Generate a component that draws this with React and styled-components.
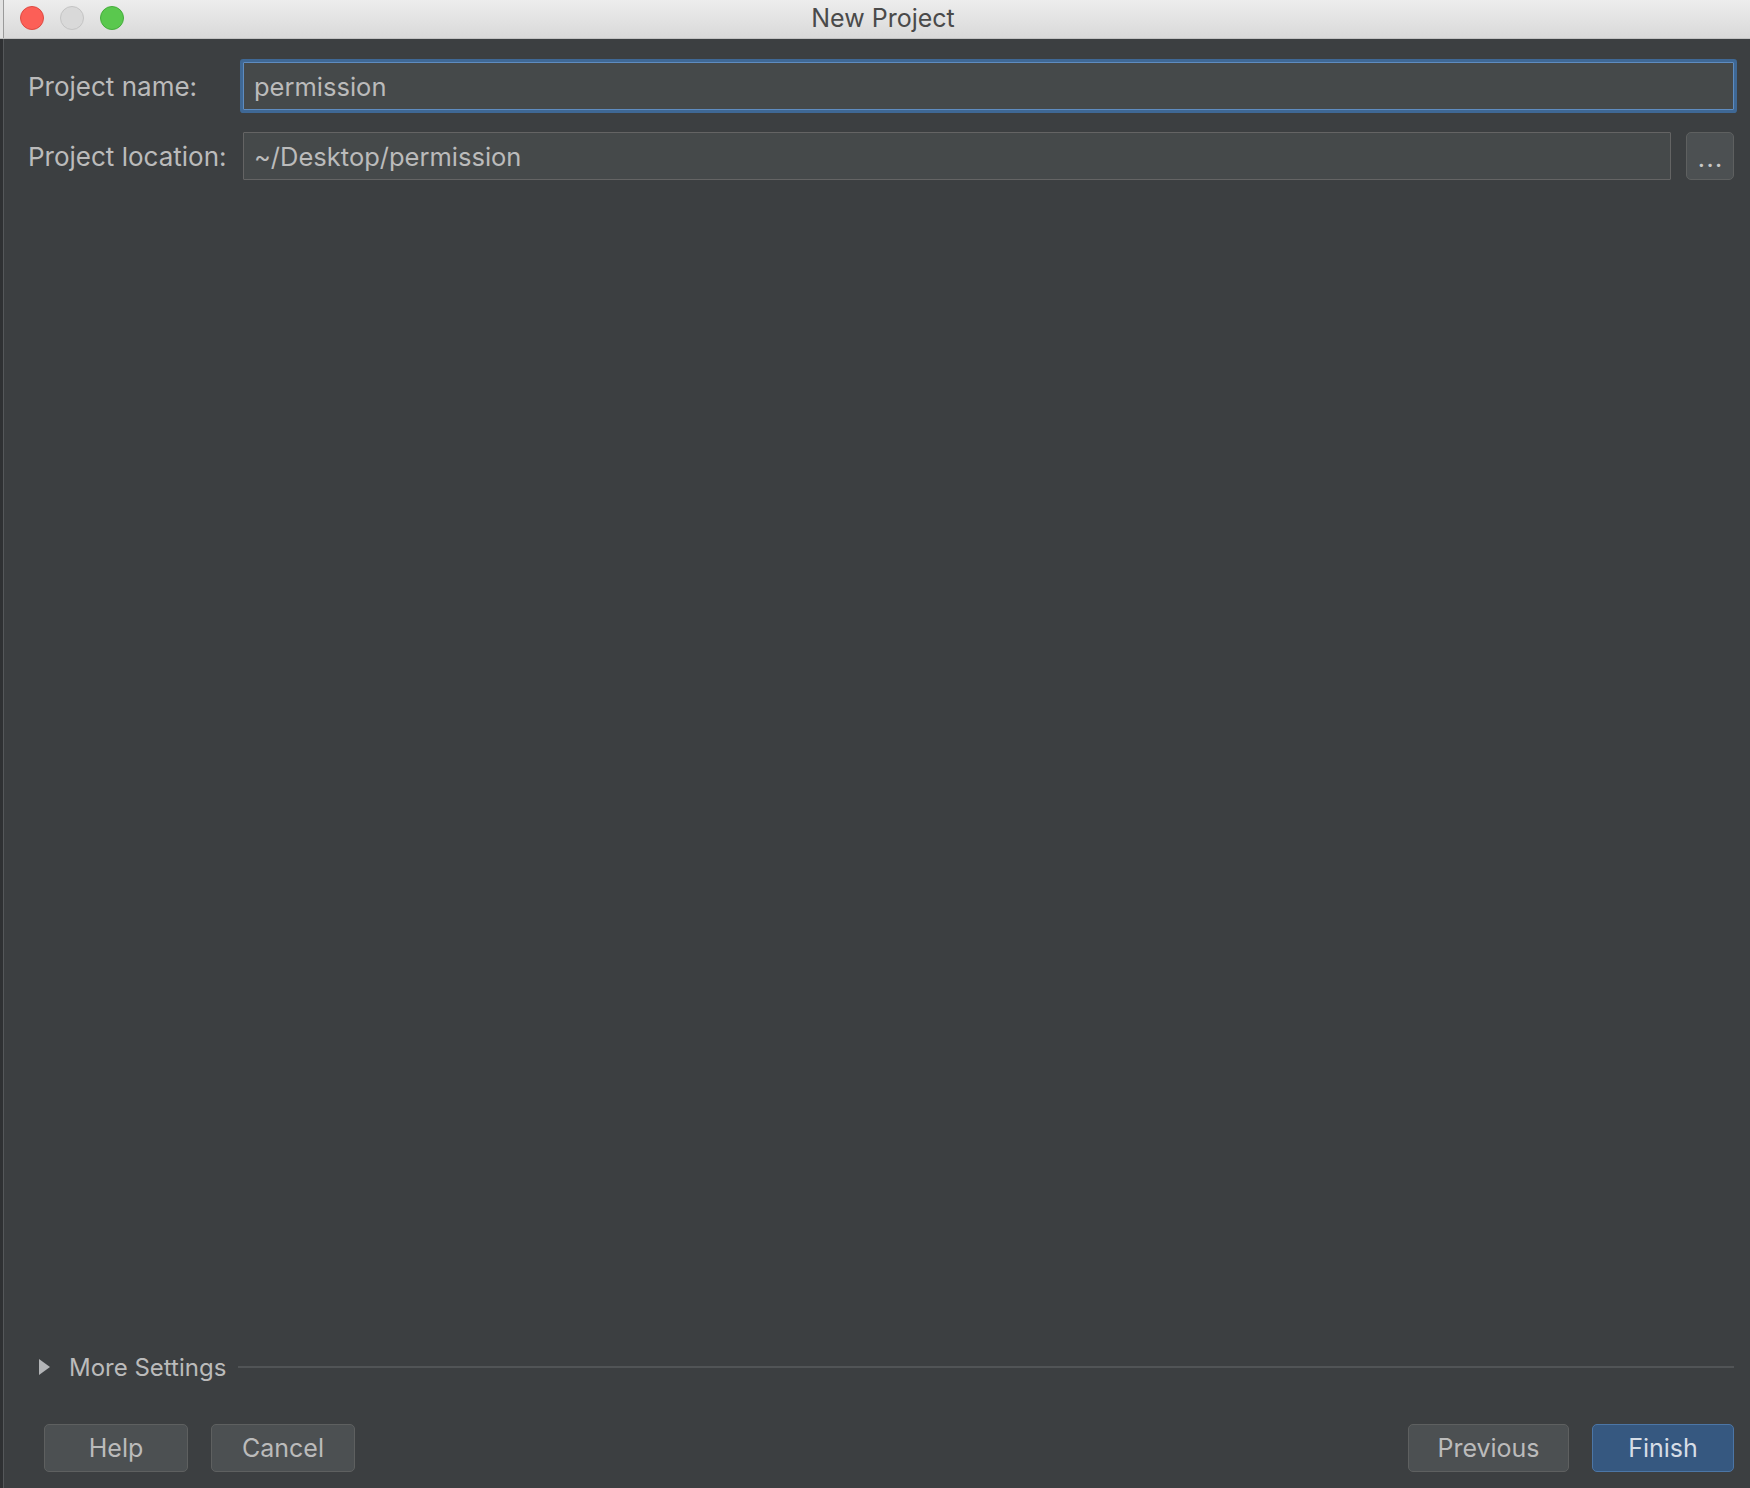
import styled, { createGlobalStyle } from 'styled-components'

const GlobalStyle = createGlobalStyle`
    html, body {
        margin: 0;
        padding: 0;
        height: 100%;
        background: #3c3f41;
    }
    #root {
        height: 100%;
    }
    * {
        box-sizing: border-box;
    }
`

export default function App() {
    return (
        <Window>
            <GlobalStyle />
            <TitleBar>
                <Lights>
                    <Light color="#fc5f57" edge="#de4a42" />
                    <Light color="#d9d9d9" edge="#c4c4c4" />
                    <Light color="#5ac84e" edge="#45ad3c" />
                </Lights>
                <Title>New Project</Title>
                <span />
            </TitleBar>
            <Body>
                <Form>
                    <Label>Project name:</Label>
                    <Input focused wide defaultValue="permission" />
                    <Label>Project location:</Label>
                    <Input defaultValue="~/Desktop/permission" />
                    <BrowseButton>...</BrowseButton>
                </Form>
                <Spacer />
                <MoreSettings>
                    <Arrow />
                    <MoreText>More Settings</MoreText>
                    <Rule />
                </MoreSettings>
                <Footer>
                    <Group>
                        <Button>Help</Button>
                        <Button>Cancel</Button>
                    </Group>
                    <Group>
                        <Button width="161px">Previous</Button>
                        <Button primary width="142px">Finish</Button>
                    </Group>
                </Footer>
            </Body>
        </Window>
    )
}

const Window = styled.div`
    height: 100%;
    display: flex;
    flex-direction: column;
    font-family: 'Inter', 'Liberation Sans', sans-serif;
`
const TitleBar = styled.div`
    height: 39px;
    flex-shrink: 0;
    display: grid;
    grid-template-columns: 1fr auto 1fr;
    align-items: center;
    background: linear-gradient(#ededed, #d9d9d9);
    border-bottom: 1px solid #c2c2c2;
    box-shadow: inset 3px 0 0 #e2e2e2, inset 4px 0 0 #9a9a9a;
`
const Lights = styled.div`
    display: flex;
    gap: 16px;
    padding-left: 20px;
    margin-top: -3px;
`
const Light = styled.span`
    width: 24px;
    height: 24px;
    border-radius: 50%;
    background: ${(p) => p.color};
    border: 1px solid ${(p) => p.edge};
`
const Title = styled.div`
    font-size: 25px;
    color: #4a4a4a;
    margin-left: 16px;
    margin-top: -2px;
`
const Body = styled.div`
    flex: 1;
    display: flex;
    flex-direction: column;
    padding: 23px 16px 16px 28px;
    background: #3c3f41;
    box-shadow: inset 3px 0 0 #2f3133, inset 4px 0 0 #55585a;
`
const Form = styled.div`
    display: grid;
    grid-template-columns: 200px 1fr 48px;
    column-gap: 15px;
    row-gap: 22px;
    align-items: center;
`
const Label = styled.label`
    font-size: 26px;
    color: #bbbbbb;
    white-space: nowrap;
`
const Input = styled.input`
    grid-column: ${(p) => (p.wide ? '2 / 4' : 'auto')};
    height: 48px;
    padding: 0 10px;
    font-family: inherit;
    font-size: 25.5px;
    color: #bbbbbb;
    background: #45494a;
    border: 1px solid ${(p) => (p.focused ? '#5e8cc0' : '#646464')};
    box-shadow: ${(p) => (p.focused ? '0 0 0 3px #3f6895' : 'none')};
    border-radius: 1px;
    outline: none;
`
const BrowseButton = styled.button`
    height: 48px;
    width: 48px;
    padding: 8px 0 0;
    font-family: inherit;
    font-size: 20px;
    font-weight: 700;
    color: #c8c8c8;
    background: #4c5052;
    border: 1px solid #5e6060;
    border-radius: 5px;
    letter-spacing: 2px;
    text-indent: 2px;
`
const Spacer = styled.div`
    flex: 1;
`
const MoreSettings = styled.div`
    display: flex;
    align-items: center;
    height: 30px;
    padding-left: 11px;
`
const Arrow = styled.span`
    width: 0;
    height: 0;
    border-top: 8px solid transparent;
    border-bottom: 8px solid transparent;
    border-left: 11px solid #b3b5b7;
`
const MoreText = styled.span`
    font-size: 24px;
    color: #bbbbbb;
    margin-left: 19px;
`
const Rule = styled.div`
    flex: 1;
    height: 2px;
    margin-left: 12px;
    background: #515456;
`
const Footer = styled.div`
    display: flex;
    justify-content: space-between;
    margin-top: 42px;
    padding-left: 16px;
`
const Group = styled.div`
    display: flex;
    gap: 23px;
`
const Button = styled.button`
    width: ${(p) => p.width || '144px'};
    height: 48px;
    font-family: inherit;
    font-size: 25px;
    color: ${(p) => (p.primary ? '#d6dde6' : '#bbbbbb')};
    background: ${(p) => (p.primary ? '#365880' : '#4c5052')};
    border: 1px solid ${(p) => (p.primary ? '#4c76a6' : '#5e6060')};
    border-radius: 5px;
    cursor: pointer;
`
